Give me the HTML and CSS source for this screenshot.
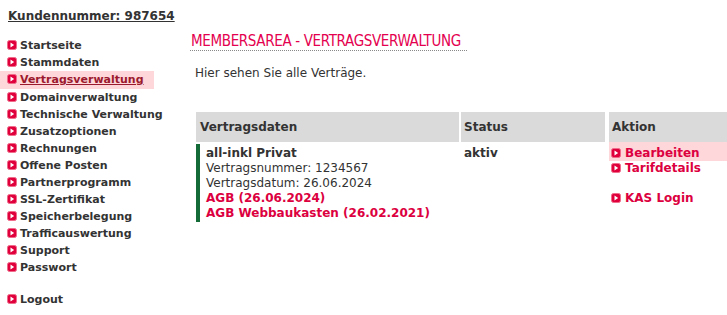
FILE: index.html
```html
<!DOCTYPE html>
<html lang="de">
<head>
<meta charset="utf-8">
<title>Membersarea - Vertragsverwaltung</title>
<link rel="stylesheet" href="styles.css">
</head>
<body>
<div class="page">
  <aside class="sidebar">
    <div class="customer">Kundennummer: 987654</div>
    <ul class="nav">
      <li><a href="#"><svg class="ico" viewBox="0 0 10 10"><rect x="0.5" y="0.5" width="9" height="9" rx="2" fill="#e0003c" stroke="#f06a8a"/><polygon points="3.5,2.5 7.2,5 3.5,7.5" fill="#fff"/></svg>Startseite</a></li>
      <li><a href="#"><svg class="ico" viewBox="0 0 10 10"><rect x="0.5" y="0.5" width="9" height="9" rx="2" fill="#e0003c" stroke="#f06a8a"/><polygon points="3.5,2.5 7.2,5 3.5,7.5" fill="#fff"/></svg>Stammdaten</a></li>
      <li class="active"><a href="#"><svg class="ico" viewBox="0 0 10 10"><rect x="0.5" y="0.5" width="9" height="9" rx="2" fill="#e0003c" stroke="#f06a8a"/><polygon points="3.5,2.5 7.2,5 3.5,7.5" fill="#fff"/></svg><span class="u">Vertragsverwaltung</span></a></li>
      <li><a href="#"><svg class="ico" viewBox="0 0 10 10"><rect x="0.5" y="0.5" width="9" height="9" rx="2" fill="#e0003c" stroke="#f06a8a"/><polygon points="3.5,2.5 7.2,5 3.5,7.5" fill="#fff"/></svg>Domainverwaltung</a></li>
      <li><a href="#"><svg class="ico" viewBox="0 0 10 10"><rect x="0.5" y="0.5" width="9" height="9" rx="2" fill="#e0003c" stroke="#f06a8a"/><polygon points="3.5,2.5 7.2,5 3.5,7.5" fill="#fff"/></svg>Technische Verwaltung</a></li>
      <li><a href="#"><svg class="ico" viewBox="0 0 10 10"><rect x="0.5" y="0.5" width="9" height="9" rx="2" fill="#e0003c" stroke="#f06a8a"/><polygon points="3.5,2.5 7.2,5 3.5,7.5" fill="#fff"/></svg>Zusatzoptionen</a></li>
      <li><a href="#"><svg class="ico" viewBox="0 0 10 10"><rect x="0.5" y="0.5" width="9" height="9" rx="2" fill="#e0003c" stroke="#f06a8a"/><polygon points="3.5,2.5 7.2,5 3.5,7.5" fill="#fff"/></svg>Rechnungen</a></li>
      <li><a href="#"><svg class="ico" viewBox="0 0 10 10"><rect x="0.5" y="0.5" width="9" height="9" rx="2" fill="#e0003c" stroke="#f06a8a"/><polygon points="3.5,2.5 7.2,5 3.5,7.5" fill="#fff"/></svg>Offene Posten</a></li>
      <li><a href="#"><svg class="ico" viewBox="0 0 10 10"><rect x="0.5" y="0.5" width="9" height="9" rx="2" fill="#e0003c" stroke="#f06a8a"/><polygon points="3.5,2.5 7.2,5 3.5,7.5" fill="#fff"/></svg>Partnerprogramm</a></li>
      <li><a href="#"><svg class="ico" viewBox="0 0 10 10"><rect x="0.5" y="0.5" width="9" height="9" rx="2" fill="#e0003c" stroke="#f06a8a"/><polygon points="3.5,2.5 7.2,5 3.5,7.5" fill="#fff"/></svg>SSL-Zertifikat</a></li>
      <li><a href="#"><svg class="ico" viewBox="0 0 10 10"><rect x="0.5" y="0.5" width="9" height="9" rx="2" fill="#e0003c" stroke="#f06a8a"/><polygon points="3.5,2.5 7.2,5 3.5,7.5" fill="#fff"/></svg>Speicherbelegung</a></li>
      <li><a href="#"><svg class="ico" viewBox="0 0 10 10"><rect x="0.5" y="0.5" width="9" height="9" rx="2" fill="#e0003c" stroke="#f06a8a"/><polygon points="3.5,2.5 7.2,5 3.5,7.5" fill="#fff"/></svg>Trafficauswertung</a></li>
      <li><a href="#"><svg class="ico" viewBox="0 0 10 10"><rect x="0.5" y="0.5" width="9" height="9" rx="2" fill="#e0003c" stroke="#f06a8a"/><polygon points="3.5,2.5 7.2,5 3.5,7.5" fill="#fff"/></svg>Support</a></li>
      <li><a href="#"><svg class="ico" viewBox="0 0 10 10"><rect x="0.5" y="0.5" width="9" height="9" rx="2" fill="#e0003c" stroke="#f06a8a"/><polygon points="3.5,2.5 7.2,5 3.5,7.5" fill="#fff"/></svg>Passwort</a></li>
      <li class="logout"><a href="#"><svg class="ico" viewBox="0 0 10 10"><rect x="0.5" y="0.5" width="9" height="9" rx="2" fill="#e0003c" stroke="#f06a8a"/><polygon points="3.5,2.5 7.2,5 3.5,7.5" fill="#fff"/></svg>Logout</a></li>
    </ul>
  </aside>
  <main class="main">
    <h1 class="title">MEMBERSAREA - VERTRAGSVERWALTUNG</h1>
    <p class="intro">Hier sehen Sie alle Verträge.</p>
    <div class="contracts">
      <div class="th th-data">Vertragsdaten</div>
      <div class="th th-status">Status</div>
      <div class="th th-action">Aktion</div>
      <div class="td td-data">
        <div class="name">all-inkl Privat</div>
        <div>Vertragsnummer: 1234567</div>
        <div>Vertragsdatum: 26.06.2024</div>
        <a class="agb" href="#">AGB (26.06.2024)</a>
        <a class="agb" href="#">AGB Webbaukasten (26.02.2021)</a>
      </div>
      <div class="td td-status">aktiv</div>
      <div class="td td-action">
        <a class="act hl" href="#"><svg class="ico" viewBox="0 0 10 10"><rect x="0.5" y="0.5" width="9" height="9" rx="2" fill="#e0003c" stroke="#f06a8a"/><polygon points="3.5,2.5 7.2,5 3.5,7.5" fill="#fff"/></svg>Bearbeiten</a>
        <a class="act" href="#"><svg class="ico" viewBox="0 0 10 10"><rect x="0.5" y="0.5" width="9" height="9" rx="2" fill="#e0003c" stroke="#f06a8a"/><polygon points="3.5,2.5 7.2,5 3.5,7.5" fill="#fff"/></svg>Tarifdetails</a>
        <a class="act gap" href="#"><svg class="ico" viewBox="0 0 10 10"><rect x="0.5" y="0.5" width="9" height="9" rx="2" fill="#e0003c" stroke="#f06a8a"/><polygon points="3.5,2.5 7.2,5 3.5,7.5" fill="#fff"/></svg>KAS Login</a>
      </div>
    </div>
  </main>
</div>
</body>
</html>
```

FILE: styles.css
```css
html, body {
  margin: 0;
  padding: 0;
  background: #fff;
  overflow: hidden;
}
body {
  font-family: "DejaVu Sans", Verdana, sans-serif;
  font-size: 12px;
  color: #333;
}
.page {
  display: flex;
  align-items: flex-start;
}
.sidebar {
  width: 190px;
  flex: none;
}
.customer {
  margin: 8px 0 0 8px;
  font-size: 12px;
  line-height: 16px;
  font-weight: bold;
  text-decoration: underline;
  color: #333;
}
.nav {
  list-style: none;
  margin: 13px 0 0 0;
  padding: 0;
  width: 154px;
}
.nav li a {
  display: block;
  padding-left: 7px;
  line-height: 17px;
  font-size: 11px;
  font-weight: bold;
  color: #333;
  text-decoration: none;
  white-space: nowrap;
}
.nav li.active a {
  background: #fdd7d9;
  color: #9c1a2e;
  height: 18px;
}
.nav li.active .u {
  text-decoration: underline;
}
.nav li.logout {
  margin-top: 15px;
}
.ico {
  width: 10px;
  height: 10px;
  vertical-align: -1px;
  margin-right: 3px;
}
.main {
  flex: 1;
  min-width: 0;
}
.title {
  display: inline-block;
  margin: 32px 0 0 0;
  padding: 0 6px 0 1px;
  font-family: "DejaVu Sans Condensed", "DejaVu Sans", sans-serif;
  font-stretch: condensed;
  font-weight: normal;
  font-size: 15px;
  letter-spacing: -0.35px;
  line-height: 18px;
  color: #e4004f;
  border-bottom: 1px dotted #888;
}
.intro {
  margin: 15px 0 0 5px;
  line-height: 15px;
  color: #333;
}
.contracts {
  margin: 31px 0 0 6px;
  display: grid;
  grid-template-columns: 263px 144px 1fr;
  column-gap: 2px;
  row-gap: 2px;
}
.th {
  background: #dadada;
  height: 30px;
  line-height: 30px;
  padding-left: 3px;
  font-weight: bold;
  color: #333;
}
.th-data {
  padding-left: 4px;
}
.th-action,
.td-action {
  margin-left: 2px;
}
.td {
  line-height: 15px;
  padding-top: 2px;
}
.td-data {
  border-left: 4px solid #146b38;
  padding-left: 6px;
  padding-bottom: 1px;
}
.name {
  font-weight: bold;
}
.agb {
  display: block;
  font-weight: bold;
  color: #dc0040;
  text-decoration: none;
}
.td-status {
  padding-left: 3px;
  font-weight: bold;
}
.act {
  display: block;
  padding-left: 2px;
  font-weight: bold;
  color: #dc0040;
  text-decoration: none;
  white-space: nowrap;
}
.act .ico {
  margin-right: 4px;
}
.act.hl {
  background: #fdd7d9;
  margin-top: -4px;
  padding-top: 4px;
}
.act.gap {
  margin-top: 15px;
}
```
